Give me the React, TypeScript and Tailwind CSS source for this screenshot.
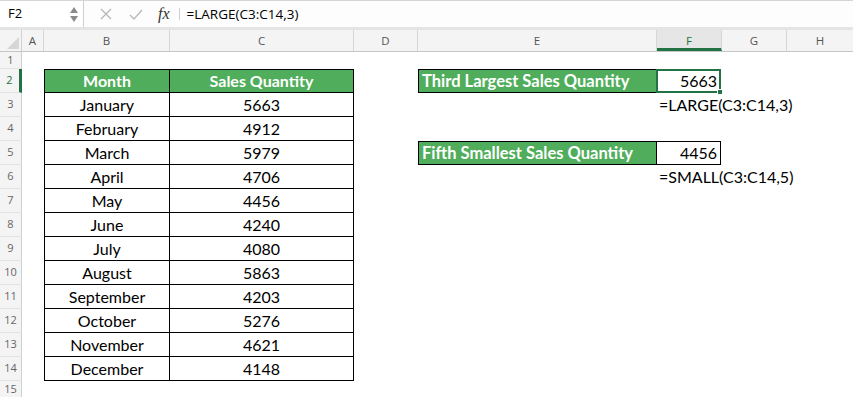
import React from "react"

const months: [string, number][] = [
  ["January", 5663],
  ["February", 4912],
  ["March", 5979],
  ["April", 4706],
  ["May", 4456],
  ["June", 4240],
  ["July", 4080],
  ["August", 5863],
  ["September", 4203],
  ["October", 5276],
  ["November", 4621],
  ["December", 4148],
]

const font = { fontFamily: "Lato, 'Open Sans', sans-serif" }

function RowHead({ n, active }: { n: number; active?: boolean }) {
  return (
    <div
      className={`w-[22px] shrink-0 flex items-center justify-center bg-[#f4f4f4] border-b border-[#e2e2e2] text-[11px] ${
        active ? "text-[#217346] border-r-[3px] border-r-[#217346]" : "text-[#666] border-r border-r-[#d0d0d0]"
      }`}
      style={{ fontFamily: "'Open Sans', sans-serif" }}
    >
      {n}
    </div>
  )
}

export default function App() {
  return (
    <div className="w-[853px] h-[397px] overflow-hidden bg-white text-black" style={font}>
      {/* formula bar */}
      <div className="h-[30px] flex border-t border-[#d6d6d6] border-b-[3px] border-b-[#e4e4e4] bg-[#fdfdfd]">
        <div className="w-[84px] shrink-0 flex items-center justify-between pl-[8px] pr-[5px] border-r border-[#cfcfcf] bg-white">
          <span className="text-[13px]" style={{ fontFamily: "'Open Sans', sans-serif" }}>F2</span>
          <div className="flex flex-col items-center gap-[3px]">
            <svg width="8" height="6" viewBox="0 0 8 6"><path d="M4 0 L8 6 L0 6 Z" fill="#8a8a8a" /></svg>
            <svg width="8" height="6" viewBox="0 0 8 6"><path d="M0 0 L8 0 L4 6 Z" fill="#8a8a8a" /></svg>
          </div>
        </div>
        <div className="flex items-center pl-[16px] gap-[17px]">
          <svg width="12" height="12" viewBox="0 0 12 12"><path d="M1 1 L11 11 M11 1 L1 11" stroke="#b8b8b8" strokeWidth="1.3" /></svg>
          <svg width="14" height="11" viewBox="0 0 14 11"><path d="M1 6 L5 10 L13 1" stroke="#b8b8b8" strokeWidth="1.3" fill="none" /></svg>
          <span className="text-[16px] italic text-[#333] -ml-[2px]" style={{ fontFamily: "'Liberation Serif', serif" }}>fx</span>
        </div>
        <div className="ml-[9px] my-[7px] w-px bg-[#cfcfcf]" />
        <div className="flex items-center pl-[7px] text-[13.5px]" style={{ fontFamily: "'Open Sans', sans-serif" }}>
          =LARGE(C3:C14,3)
        </div>
      </div>

      {/* column headers */}
      <div className="flex h-[22px] bg-[#f4f4f4] border-b border-[#c6c6c6] text-[11.5px] text-[#555]" style={{ fontFamily: "'Open Sans', sans-serif" }}>
        <div className="w-[22px] shrink-0 border-r border-[#d0d0d0] flex items-end justify-end p-[2px]">
          <svg width="12" height="12" viewBox="0 0 12 12"><path d="M12 0 L12 12 L0 12 Z" fill="#d6d6d6" /></svg>
        </div>
        <div className="w-[22px] shrink-0 border-r border-[#d6d6d6] flex items-center justify-center">A</div>
        <div className="w-[126px] shrink-0 border-r border-[#d6d6d6] flex items-center justify-center">B</div>
        <div className="w-[184px] shrink-0 border-r border-[#d6d6d6] flex items-center justify-center">C</div>
        <div className="w-[64px] shrink-0 border-r border-[#d6d6d6] flex items-center justify-center">D</div>
        <div className="w-[239px] shrink-0 border-r border-[#d6d6d6] flex items-center justify-center">E</div>
        <div className="w-[65px] shrink-0 border-r border-[#d6d6d6] border-b-[3px] border-b-[#217346] bg-[#e6e6e6] text-[#217346] flex items-center justify-center pt-[3px]">F</div>
        <div className="w-[65px] shrink-0 border-r border-[#d6d6d6] flex items-center justify-center">G</div>
        <div className="w-[66px] shrink-0 flex items-center justify-center">H</div>
      </div>

      {/* row 1 */}
      <div className="flex h-[17px]">
        <RowHead n={1} />
      </div>

      {/* row 2 */}
      <div className="flex h-[24px] text-[16px]">
        <RowHead n={2} active />
        <div className="w-[22px] shrink-0" />
        <div className="w-[126px] shrink-0 bg-[#4fad5b] text-white font-bold border border-black flex items-center justify-center">Month</div>
        <div className="w-[184px] shrink-0 bg-[#4fad5b] text-white font-bold border border-l-0 border-black flex items-center justify-center">Sales Quantity</div>
        <div className="w-[64px] shrink-0" />
        <div className="w-[239px] shrink-0 bg-[#4fad5b] text-white font-bold text-[16.5px] border border-black flex items-center pl-[3px]">Third Largest Sales Quantity</div>
        <div className="relative w-[65px] shrink-0 border-2 border-[#217346] -ml-px flex items-center justify-end pr-[2px]">
          5663
          <div className="absolute -right-[4px] -bottom-[4px] w-[6px] h-[6px] bg-[#217346] border border-white" />
        </div>
      </div>

      {months.map(([m, q], i) => {
        const rowNo = i + 3
        return (
          <div key={m} className="flex h-[24px] text-[16px]">
            <RowHead n={rowNo} />
            <div className="w-[22px] shrink-0" />
            <div className="w-[126px] shrink-0 border-x border-b border-black flex items-center justify-center">{m}</div>
            <div className="w-[184px] shrink-0 border-r border-b border-black flex items-center justify-center">{q}</div>
            <div className="w-[64px] shrink-0" />
            {rowNo === 3 && (
              <div className="pl-[241px] flex items-center whitespace-nowrap">=LARGE(C3:C14,3)</div>
            )}
            {rowNo === 5 && (
              <>
                <div className="w-[239px] shrink-0 bg-[#4fad5b] text-white font-bold text-[16.5px] border border-black flex items-center pl-[3px]">Fifth Smallest Sales Quantity</div>
                <div className="w-[64px] shrink-0 border border-l-0 border-black flex items-center justify-end pr-[3px]">4456</div>
              </>
            )}
            {rowNo === 6 && (
              <div className="pl-[241px] flex items-center whitespace-nowrap">=SMALL(C3:C14,5)</div>
            )}
          </div>
        )
      })}

      {/* row 15 */}
      <div className="flex h-[17px]">
        <RowHead n={15} />
      </div>
    </div>
  )
}
